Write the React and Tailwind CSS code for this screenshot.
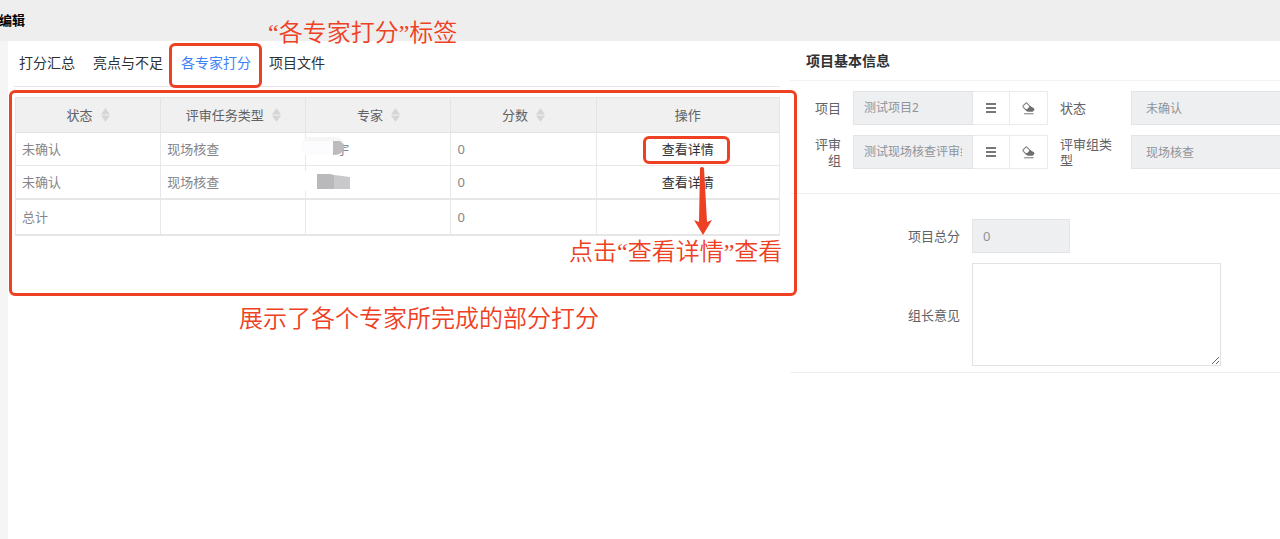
import React from 'react';

const tabs = ['打分汇总', '亮点与不足', '各专家打分', '项目文件'];

const columns = [
  { title: '状态', sortable: true },
  { title: '评审任务类型', sortable: true },
  { title: '专家', sortable: true },
  { title: '分数', sortable: true },
  { title: '操作', sortable: false },
];

const rows = [
  { id: 1, status: '未确认', type: '现场核查', expert: '宇', score: 0 },
  { id: 2, status: '未确认', type: '现场核查', expert: '', score: 0 },
];

const SortIcon = () => (
  <svg width="9" height="14" viewBox="0 0 9 14" fill="#d6d6d6">
    <path d="M4.5 0 L9 6.5 H0 Z" />
    <path d="M4.5 14 L0 7.5 H9 Z" />
  </svg>
);

const BarsIcon = () => (
  <svg width="10" height="10" viewBox="0 0 10 10" fill="#777777">
    <rect width="10" height="2" />
    <rect y="4" width="10" height="2" />
    <rect y="8" width="10" height="2" />
  </svg>
);

const EraserIcon = () => (
  <svg width="13" height="13" viewBox="0 0 37 37">
    <path d="M11 3 L3 11 Q2 13 4 15 L13 24 L24 14 L14 3 Q12 2 11 3 Z" fill="none" stroke="#7d7d7d" strokeWidth="3" />
    <path d="M22 11 L34 18 Q37 21 34 24 L30 28 H16 L10 22 Q17 22 22 11 Z" fill="#6f6f6f" />
    <rect x="6" y="32" width="27" height="3" fill="#808080" />
  </svg>
);

// smudges that hide the expert names
const MaskedName = ({ row }) => (
  <svg className="absolute -left-1 top-1 pointer-events-none" width="56" height="26" viewBox="0 0 56 26">
    {row === 1 ? (
      <>
        <path d="M5 0 H34 Q40 1 42 7 H0 Q1 2 5 0 Z" fill="#f6f6f6" />
        <rect y="4" width="32" height="14" rx="4" fill="#fcfcff" />
        <path d="M31 4 H38 Q43 7 42 12 Q40 18 31 18 Z" fill="#bcbcbe" />
      </>
    ) : (
      <>
        <rect width="16" height="20" y="1" rx="4" fill="#ffffff" />
        <path d="M15 4 H28 L32 5 V19 H15 Z" fill="#b9b9bb" />
        <path d="M32 5 L48 7 V19 H32 Z" fill="#c9c9cb" />
      </>
    )}
  </svg>
);

const ScoreTable = () => (
  <table className="w-full table-fixed border-collapse text-[13px] leading-4 text-[#86868a] border border-[#e6e6e6]">
    <colgroup>
      <col className="w-[19%]" />
      <col className="w-[19%]" />
      <col className="w-[19%]" />
      <col className="w-[19%]" />
      <col className="w-[24%]" />
    </colgroup>
    <thead className="bg-[#f0f0f0] text-[#606266]">
      <tr className="h-[35px]">
        {columns.map(col => (
          <th key={col.title} className="border border-[#e4e4e4] font-normal p-0">
            <div className="flex items-center justify-center gap-2">
              {col.title}
              {col.sortable && <SortIcon />}
            </div>
          </th>
        ))}
      </tr>
    </thead>
    <tbody>
      {rows.map(row => (
        <tr key={row.id} className="h-[33px]">
          <td className="border border-[#e8e8e8] px-1.5 py-0">{row.status}</td>
          <td className="border border-[#e8e8e8] px-1.5 py-0">{row.type}</td>
          <td className="relative border border-[#e8e8e8] pl-[30px] py-0">
            {row.expert}
            <MaskedName row={row.id} />
          </td>
          <td className="border border-[#e8e8e8] px-1.5 py-0">{row.score}</td>
          <td className="border border-[#e8e8e8] p-0 text-center">
            <button type="button" className="text-[#303133]">查看详情</button>
          </td>
        </tr>
      ))}
    </tbody>
    <tfoot>
      <tr className="h-9 border-y-2 border-[#e6e6e6]">
        <td className="border-x border-[#e8e8e8] px-1.5 py-0">总计</td>
        <td className="border-x border-[#e8e8e8]"></td>
        <td className="border-x border-[#e8e8e8]"></td>
        <td className="border-x border-[#e8e8e8] px-1.5 py-0">0</td>
        <td className="border-x border-[#e8e8e8]"></td>
      </tr>
    </tfoot>
  </table>
);

// red callouts drawn over the left panel
const Callouts = () => (
  <div className="absolute inset-0 pointer-events-none font-['Liberation_Serif','Noto_Sans_CJK_SC',sans-serif] text-2xl leading-8 font-[350] whitespace-nowrap text-[#ee4023]">
    <p className="absolute left-[260px] -top-6">“各专家打分”标签</p>
    <div className="absolute left-[161px] top-0.5 w-[93px] h-[45px] rounded-md border-3 border-[#ee4023]" />
    <div className="absolute left-px top-[49px] w-[788px] h-[206px] rounded-md border-3 border-[#ee4023]" />
    <div className="absolute left-[635px] top-[95px] w-[87px] h-7 rounded-md border-3 border-[#ee4023]" />
    <svg className="absolute left-[685px] top-[125px]" width="20" height="70" viewBox="0 0 20 70" fill="#ee4023">
      <path d="M7 2 Q9 0 11 2 L14 56 L19 54 L10 69 L1 54 L6 56 Z" />
    </svg>
    <p className="absolute left-[561px] top-[195px]">点击“查看详情”查看</p>
    <p className="absolute left-[231px] top-[262px]">展示了各个专家所完成的部分打分</p>
  </div>
);

const PickerField = ({ id, value }) => (
  <div className="flex h-[34px] w-[195px] shrink-0">
    <input
      id={id}
      disabled
      defaultValue={value}
      className="w-[120px] border border-[#e4e4e6] bg-[#eeeff1] px-2.5 text-xs text-[#909399]"
    />
    <button type="button" aria-label="选择" className="flex w-[37px] items-center justify-center border-y border-r border-[#ebebeb]">
      <BarsIcon />
    </button>
    <button type="button" aria-label="清除" className="flex w-[38px] items-center justify-center border-y border-r border-[#ebebeb]">
      <EraserIcon />
    </button>
  </div>
);

const InfoRow = ({ name, label, value, sideLabel, sideValue }) => (
  <div className="flex items-center gap-3 pl-5">
    <label htmlFor={name} className="w-[31px] shrink-0 text-right">{label}</label>
    <PickerField id={name} value={value} />
    <label htmlFor={`${name}-side`} className="w-[59px] shrink-0">{sideLabel}</label>
    <input
      id={`${name}-side`}
      disabled
      defaultValue={sideValue}
      className="h-[34px] min-w-0 flex-1 border-y border-l border-[#e4e4e6] bg-[#eeeff1] px-3.5 text-xs text-[#909399]"
    />
  </div>
);

const ProjectInfo = () => (
  <section className="min-w-0 flex-[490] text-[13px] leading-4 text-[#606266]">
    <h2 className="flex h-10 items-center border-b border-[#f2f2f2] pl-4 text-sm font-bold text-[#303133]">项目基本信息</h2>
    <div className="flex flex-col gap-2.5 border-b border-[#efefef] pt-2.5 pb-6">
      <InfoRow name="project" label="项目" value="测试项目2" sideLabel="状态" sideValue="未确认" />
      <InfoRow name="group" label="评审组" value="测试现场核查评审组" sideLabel="评审组类型" sideValue="现场核查" />
    </div>
    <div className="flex flex-col gap-2.5 border-b border-[#efefef] pt-[25px] pb-1.5">
      <div className="flex items-center gap-3">
        <label htmlFor="total" className="w-[170px] text-right">项目总分</label>
        <input
          id="total"
          disabled
          defaultValue="0"
          className="h-[34px] w-[98px] border border-[#e4e4e6] bg-[#eeeff1] px-2.5 text-[13px] text-[#909399]"
        />
      </div>
      <div className="flex items-center gap-3">
        <label htmlFor="opinion" className="w-[170px] text-right">组长意见</label>
        <textarea id="opinion" className="block h-[103px] w-[249px] border border-[#e2e2e2] p-2" />
      </div>
    </div>
  </section>
);

const App = () => {
  return (
    <div className="flex min-h-screen flex-col overflow-hidden bg-white font-['Noto_Sans','Noto_Sans_CJK_SC',sans-serif]">
      <header className="flex h-[41px] items-center bg-[#eeeeee]">
        <h1 className="-ml-px text-[13px] font-bold text-black">编辑</h1>
      </header>
      <main className="flex flex-1 gap-2.5 border-l-8 border-[#f5f5f5]">
        <section className="relative min-w-0 flex-[772]">
          <nav className="ml-1.5 flex h-[46px] items-stretch gap-[18px] border-b border-[#e4e7ed] pl-[5px] text-sm text-[#303133]">
            {tabs.map(tab => (
              <button
                key={tab}
                type="button"
                className={tab === '各专家打分' ? 'border-b border-[#3b82f6] text-[#3b82f6]' : 'border-b border-transparent'}
              >
                {tab}
              </button>
            ))}
          </nav>
          <div className="pl-[7px] pt-2.5">
            <ScoreTable />
          </div>
          <Callouts />
        </section>
        <ProjectInfo />
      </main>
    </div>
  );
};

export default App;
